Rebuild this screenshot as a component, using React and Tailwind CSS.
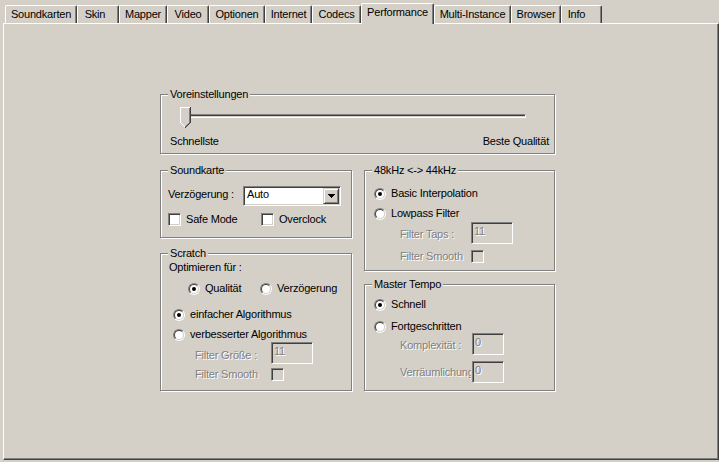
import React from 'react';

const tabs = [
  { label: 'Soundkarten', cls: 'w-[72px]' },
  { label: 'Skin', cls: 'w-[42px] pr-[6px]' },
  { label: 'Mapper', cls: 'w-[48px]' },
  { label: 'Video', cls: 'w-[42px]' },
  { label: 'Optionen', cls: 'w-[56px]' },
  { label: 'Internet', cls: 'w-[47px]' },
  { label: 'Codecs', cls: 'w-[49px]' },
  { label: 'Performance', cls: 'w-[73px]', selected: true },
  { label: 'Multi-Instance', cls: 'w-[77px]' },
  { label: 'Browser', cls: 'w-[50px]' },
  { label: 'Info', cls: 'w-[41px] pr-[10px]' },
];

const disabledText = 'text-[#808080] [text-shadow:1px_1px_0_#fff]';

const Tab = ({ label, cls, selected }) =>
  selected ? (
    <div className={`relative z-10 -mb-px h-[21px] flex justify-center pt-[2px] bg-[#d4d0c8] border-l border-t border-r border-white border-r-[#404040] shadow-[inset_-1px_0_0_#808080] rounded-t-[2px] ${cls}`}>
      {label}
    </div>
  ) : (
    <div className={`h-[18px] flex justify-center pt-[2px] border-l border-t border-r border-white border-r-[#404040] shadow-[inset_-1px_0_0_#808080] rounded-t-[2px] ${cls}`}>
      {label}
    </div>
  );

// etched group box, the title sits over the top line
const Group = ({ title, className, children }) => (
  <div className={`relative border border-[#808080] shadow-[inset_1px_1px_0_#fff,1px_1px_0_#fff] ${className}`}>
    <span className="absolute -top-[7px] left-[7px] px-[2px] bg-[#d4d0c8] whitespace-nowrap">{title}</span>
    {children}
  </div>
);

const Radio = ({ checked }) => (
  <div className="w-[12px] h-[12px] shrink-0 flex rounded-full border border-t-[#808080] border-l-[#808080] border-r-white border-b-white">
    <div className="flex-1 flex items-center justify-center rounded-full border border-t-[#404040] border-l-[#404040] border-r-[#d4d0c8] border-b-[#d4d0c8] bg-white">
      {checked && <div className="w-[4px] h-[4px] rounded-full bg-black" />}
    </div>
  </div>
);

const Check = ({ disabled }) => (
  <div className={`w-[13px] h-[13px] shrink-0 border border-t-[#808080] border-l-[#808080] border-r-white border-b-white shadow-[inset_1px_1px_0_#404040,inset_-1px_-1px_0_#d4d0c8] ${disabled ? 'bg-[#d4d0c8]' : 'bg-white'}`} />
);

const Edit = ({ value, w }) => (
  <div className={`h-[22px] shrink-0 pl-[2px] pt-[2px] border border-t-[#808080] border-l-[#808080] border-r-white border-b-white shadow-[inset_1px_1px_0_#404040,inset_-1px_-1px_0_#d4d0c8] bg-[#d4d0c8] ${disabledText} ${w}`}>
    {value}
  </div>
);

const RadioRow = ({ checked, label, className = '' }) => (
  <div className={`h-[13px] flex items-center ${className}`}>
    <Radio checked={checked} />
    <span className="ml-[5px] whitespace-nowrap">{label}</span>
  </div>
);

const Select = () => (
  <div className="w-[98px] h-[20px] flex p-[1px] bg-white border border-t-[#808080] border-l-[#808080] border-r-white border-b-white shadow-[inset_1px_1px_0_#404040,inset_-1px_-1px_0_#d4d0c8]">
    <span className="flex-1 pl-[2px]">Auto</span>
    <div className="w-[16px] h-[16px] flex items-center justify-center bg-[#d4d0c8] border border-t-[#d4d0c8] border-l-[#d4d0c8] border-r-[#404040] border-b-[#404040] shadow-[inset_1px_1px_0_#fff,inset_-1px_-1px_0_#808080]">
      <svg width="7" height="4" viewBox="0 0 7 4" shapeRendering="crispEdges">
        <path d="M0 0h7v1H0zM1 1h5v1H1zM2 2h3v1H2zM3 3h1v1H3z" fill="#000" />
      </svg>
    </div>
  </div>
);

const Slider = () => (
  <div className="relative ml-[10px] w-[346px] h-[21px]">
    <div className="absolute top-[7px] left-0 right-0 h-[4px] border border-t-[#808080] border-l-[#808080] border-r-white border-b-white shadow-[inset_1px_1px_0_#404040]" />
    <svg className="absolute left-0 top-0" width="11" height="21" viewBox="0 0 11 21" shapeRendering="crispEdges">
      <polygon points="0,0 11,0 11,16 6,21 5,21 0,16" fill="#d4d0c8" />
      <rect x="0" y="0" width="10" height="1" fill="#fff" />
      <rect x="0" y="0" width="1" height="16" fill="#fff" />
      <rect x="1" y="16" width="1" height="1" fill="#fff" />
      <rect x="2" y="17" width="1" height="1" fill="#fff" />
      <rect x="3" y="18" width="1" height="1" fill="#fff" />
      <rect x="4" y="19" width="1" height="1" fill="#fff" />
      <rect x="10" y="0" width="1" height="16" fill="#404040" />
      <rect x="9" y="16" width="1" height="1" fill="#404040" />
      <rect x="8" y="17" width="1" height="1" fill="#404040" />
      <rect x="7" y="18" width="1" height="1" fill="#404040" />
      <rect x="6" y="19" width="1" height="1" fill="#404040" />
      <rect x="5" y="20" width="1" height="1" fill="#404040" />
      <rect x="9" y="1" width="1" height="15" fill="#808080" />
      <rect x="8" y="16" width="1" height="1" fill="#808080" />
      <rect x="7" y="17" width="1" height="1" fill="#808080" />
      <rect x="6" y="18" width="1" height="1" fill="#808080" />
      <rect x="5" y="19" width="1" height="1" fill="#808080" />
    </svg>
  </div>
);

export default function App() {
  return (
    <div className="w-[719px] h-[462px] overflow-hidden bg-[#d4d0c8] text-black text-[11px] leading-[13px] tracking-[-0.2px] font-['Liberation_Sans',Arial,sans-serif]">
      {/* Tabs */}
      <div className="h-[23px] flex items-end pl-[5px]">
        {tabs.map((t) => (
          <Tab key={t.label} {...t} />
        ))}
      </div>

      {/* Page */}
      <div className="ml-[3px] w-[716px] h-[437px] border-l border-t border-r border-b border-white border-r-[#404040] border-b-[#404040] shadow-[inset_-1px_-1px_0_#808080]">
        <div className="ml-[156px] mt-[70px] w-[395px]">
          <Group title="Voreinstellungen" className="h-[60px] pl-[9px] pr-[5px] pt-[12px]">
            <Slider />
            <div className="mt-[7px] flex justify-between">
              <span>Schnellste</span>
              <span>Beste Qualität</span>
            </div>
          </Group>

          <div className="mt-[16px] flex gap-[12px]">
            <div className="w-[192px] flex flex-col">
              <Group title="Soundkarte" className="h-[68px] pl-[7px] pt-[15px]">
                <div className="h-[20px] flex items-center">
                  <span className="w-[75px] pb-[4px] whitespace-nowrap">Verzögerung :</span>
                  <Select />
                </div>
                <div className="mt-[7px] h-[13px] flex items-center">
                  <div className="w-[93px] flex items-center">
                    <Check />
                    <span className="ml-[5px]">Safe Mode</span>
                  </div>
                  <div className="flex items-center">
                    <Check />
                    <span className="ml-[5px]">Overclock</span>
                  </div>
                </div>
              </Group>

              <Group title="Scratch" className="mt-[15px] h-[138px] pl-[8px] pt-[7px]">
                <div>Optimieren für :</div>
                <div className="mt-[8px] ml-[19px] flex">
                  <RadioRow checked label="Qualität" className="w-[72px]" />
                  <RadioRow label="Verzögerung" />
                </div>
                <RadioRow checked label="einfacher Algorithmus" className="mt-[13px] ml-[4px]" />
                <RadioRow label="verbesserter Algorithmus" className="mt-[7px] ml-[4px]" />
                <div className="mt-[1px] ml-[26px] h-[22px] flex items-center">
                  <span className={`w-[76px] mt-[4px] whitespace-nowrap ${disabledText}`}>Filter Größe :</span>
                  <Edit value="11" w="w-[42px]" />
                </div>
                <div className="mt-[4px] ml-[26px] h-[13px] flex items-center">
                  <span className={`w-[76px] whitespace-nowrap ${disabledText}`}>Filter Smooth</span>
                  <Check disabled />
                </div>
              </Group>
            </div>

            <div className="w-[191px] flex flex-col">
              <Group title="48kHz <-> 44kHz" className="h-[101px] pl-[9px] pt-[16px]">
                <RadioRow checked label="Basic Interpolation" />
                <RadioRow label="Lowpass Filter" className="mt-[7px]" />
                <div className="mt-[2px] ml-[26px] h-[22px] flex items-center">
                  <span className={`w-[71px] mt-[3px] whitespace-nowrap ${disabledText}`}>Filter Taps :</span>
                  <Edit value="11" w="w-[42px]" />
                </div>
                <div className="mt-[6px] ml-[26px] h-[13px] flex items-center">
                  <span className={`w-[71px] whitespace-nowrap ${disabledText}`}>Filter Smooth</span>
                  <Check disabled />
                </div>
              </Group>

              <Group title="Master Tempo" className="mt-[13px] h-[107px] pl-[9px] pt-[13px]">
                <RadioRow checked label="Schnell" />
                <RadioRow label="Fortgeschritten" className="mt-[9px]" />
                <div className="ml-[26px] h-[22px] flex items-center">
                  <span className={`w-[71px] mr-[1px] mt-[3px] overflow-hidden whitespace-nowrap ${disabledText}`}>Komplexität :</span>
                  <Edit value="0" w="w-[32px]" />
                </div>
                <div className="mt-[6px] ml-[26px] h-[22px] flex items-center">
                  <span className={`w-[71px] mr-[1px] mt-[1px] overflow-hidden whitespace-nowrap ${disabledText}`}>Verräumlichung</span>
                  <Edit value="0" w="w-[32px]" />
                </div>
              </Group>
            </div>
          </div>
        </div>
      </div>
    </div>
  );
}
